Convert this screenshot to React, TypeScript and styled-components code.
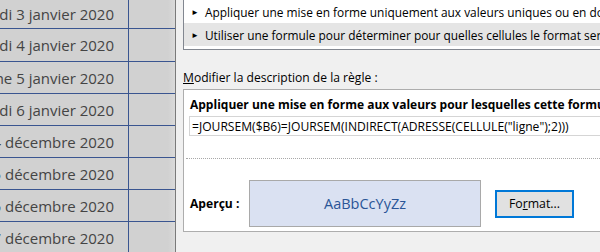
import React from "react";
import styled, { createGlobalStyle } from "styled-components";

const Global = createGlobalStyle`
  html, body { margin: 0; padding: 0; background: #f0f0f0; }
  #root { width: 600px; height: 252px; overflow: hidden; }
`;

const Screen = styled.div`
  display: flex;
  width: 600px;
  height: 252px;
  overflow: hidden;
`;

const Sheet = styled.div`
  flex: 0 0 176px;
  display: flex;
  flex-direction: column;
  background: #d1d1d1;
  border-right: 1px solid #7a7a7a;
  box-sizing: border-box;
  overflow: hidden;
`;

const SheetRow = styled.div<{ $h: number }>`
  flex: 0 0 ${(p) => p.$h}px;
  display: grid;
  grid-template-columns: 129px 1fr;
  border-bottom: 1px solid #3a5590;
  box-sizing: border-box;
`;

const DateCell = styled.div`
  border-right: 1px solid #3a5590;
  display: flex;
  align-items: center;
  justify-content: flex-end;
  padding-right: 14px;
  overflow: hidden;
  white-space: nowrap;
  font-family: "Open Sans", "Noto Sans", sans-serif;
  font-size: 15px;
  color: #444;
`;

const EmptyCell = styled.div`
  background: linear-gradient(to right, #d1d1d1 85%, #dadada 100%);
`;

const Dialog = styled.div`
  flex: 1;
  display: flex;
  flex-direction: column;
  padding-left: 7px;
  background: #f0f0f0;
  font-family: "Open Sans", "Noto Sans", sans-serif;
  font-size: 12.1px;
  color: #000;
  overflow: hidden;
  white-space: nowrap;
`;

const ListBox = styled.div`
  display: flex;
  flex-direction: column;
  background: #fff;
  border-left: 1px solid #828790;
  border-bottom: 1px solid #828790;
  height: 50px;
  box-sizing: border-box;
`;

const ListItem = styled.div<{ $selected?: boolean; $h: number }>`
  height: ${(p) => p.$h}px;
  display: flex;
  align-items: center;
  gap: 6px;
  padding-left: 7px;
  font-size: 11.9px;
  background: ${(p) => (p.$selected ? "#e5e5e5" : "#fff")};
`;

const Arrow = styled.span`
  font-size: 8px;
  color: #000;
`;

const SectionLabel = styled.div`
  margin-top: 17px;
  height: 22px;
  line-height: 22px;
  u { text-decoration: underline; }
`;

const Panel = styled.div`
  height: 143px;
  background: #fff;
  border: 1px solid #adadad;
  border-right: none;
  box-sizing: border-box;
  display: flex;
  flex-direction: column;
  padding-left: 5px;
`;

const PanelTitle = styled.div`
  font-weight: 700;
  font-size: 12px;
  height: 22px;
  line-height: 22px;
  margin-top: 4px;
  padding-left: 1px;
`;

const FormulaInput = styled.div`
  height: 20px;
  border: 1px solid #d5d5d5;
  border-right: none;
  box-sizing: border-box;
  display: flex;
  align-items: center;
  padding-left: 2px;
`;

const Separator = styled.div`
  margin-top: 22px;
  margin-left: -3px;
  border-top: 1px dotted #a8a8a8;
`;

const PreviewRow = styled.div`
  display: flex;
  align-items: center;
  margin-top: 21px;
  padding-left: 1px;
`;

const PreviewLabel = styled.div`
  font-weight: 700;
  width: 59px;
`;

const PreviewBox = styled.div`
  width: 232px;
  height: 47px;
  background: #dae1f2;
  border: 1px solid #a9a9a9;
  box-sizing: border-box;
  display: flex;
  align-items: center;
  justify-content: center;
  font-size: 14.5px;
  color: #2a5597;
`;

const FormatButton = styled.button`
  margin-left: 14px;
  width: 79px;
  height: 28px;
  background: #e1e1e1;
  border: 1px solid #0078d7;
  box-shadow: inset 0 0 0 1px #0078d7;
  font-family: "Open Sans", "Noto Sans", sans-serif;
  font-size: 12.3px;
  color: #000;
  padding: 0;
  u { text-decoration: underline; }
`;

const dates = [
  "vendredi 3 janvier 2020",
  "samedi 4 janvier 2020",
  "dimanche 5 janvier 2020",
  "lundi 6 janvier 2020",
  "jeudi 24 décembre 2020",
  "vendredi 25 décembre 2020",
  "samedi 26 décembre 2020",
  "dimanche 27 décembre 2020",
];

export default function App() {
  return (
    <>
      <Global />
      <Screen>
        <Sheet>
          {dates.map((d, i) => (
            <SheetRow key={d} $h={i === 0 ? 29 : i === 1 ? 33 : 32}>
              <DateCell>{d}</DateCell>
              <EmptyCell />
            </SheetRow>
          ))}
        </Sheet>
        <Dialog>
          <ListBox>
            <ListItem $h={23}>
              <Arrow>►</Arrow>
              Appliquer une mise en forme uniquement aux valeurs uniques ou en double
            </ListItem>
            <ListItem $h={23} $selected>
              <Arrow>►</Arrow>
              Utiliser une formule pour déterminer pour quelles cellules le format sera appliqué
            </ListItem>
          </ListBox>
          <SectionLabel>
            <u>M</u>odifier la description de la règle :
          </SectionLabel>
          <Panel>
            <PanelTitle>
              Appliquer une mise en forme aux valeurs pour lesquelles cette formule est vraie :
            </PanelTitle>
            <FormulaInput>
              =JOURSEM($B6)=JOURSEM(INDIRECT(ADRESSE(CELLULE("ligne");2)))
            </FormulaInput>
            <Separator />
            <PreviewRow>
              <PreviewLabel>Aperçu :</PreviewLabel>
              <PreviewBox>AaBbCcYyZz</PreviewBox>
              <FormatButton>
                Fo<u>r</u>mat...
              </FormatButton>
            </PreviewRow>
          </Panel>
        </Dialog>
      </Screen>
    </>
  );
}
